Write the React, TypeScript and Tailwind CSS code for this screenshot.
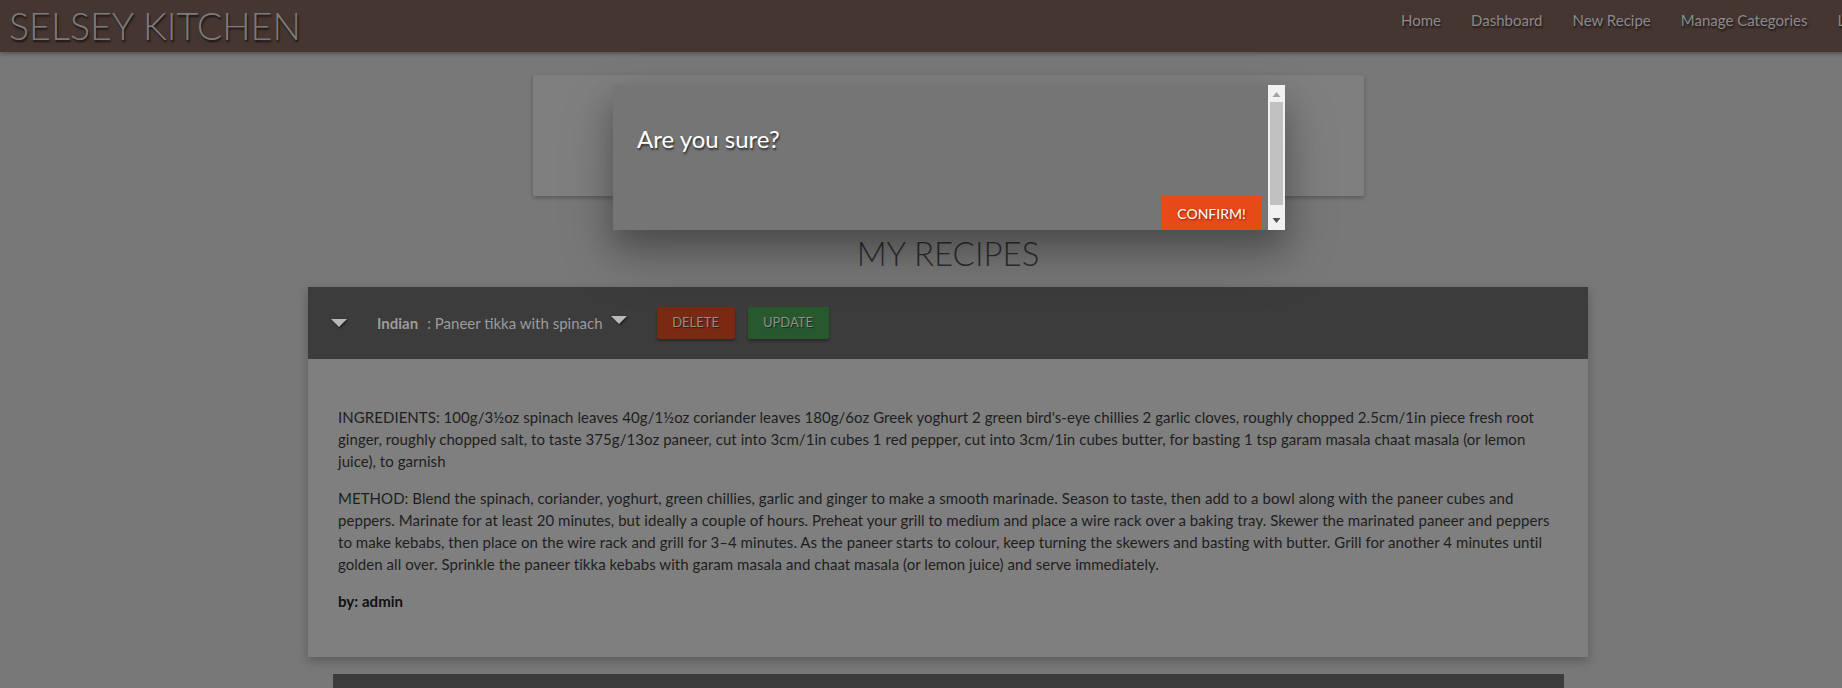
import React from "react";

const ingredients =
  "INGREDIENTS: 100g/3½oz spinach leaves 40g/1½oz coriander leaves 180g/6oz Greek yoghurt 2 green bird's-eye chillies 2 garlic cloves, roughly chopped 2.5cm/1in piece fresh root ginger, roughly chopped salt, to taste 375g/13oz paneer, cut into 3cm/1in cubes 1 red pepper, cut into 3cm/1in cubes butter, for basting 1 tsp garam masala chaat masala (or lemon juice), to garnish";

const method =
  "METHOD: Blend the spinach, coriander, yoghurt, green chillies, garlic and ginger to make a smooth marinade. Season to taste, then add to a bowl along with the paneer cubes and peppers. Marinate for at least 20 minutes, but ideally a couple of hours. Preheat your grill to medium and place a wire rack over a baking tray. Skewer the marinated paneer and peppers to make kebabs, then place on the wire rack and grill for 3–4 minutes. As the paneer starts to colour, keep turning the skewers and basting with butter. Grill for another 4 minutes until golden all over. Sprinkle the paneer tikka kebabs with garam masala and chaat masala (or lemon juice) and serve immediately.";

const navLinks = ["Home", "Dashboard", "New Recipe", "Manage Categories", "Logout"];

// small down caret used in the collapsible header
function Caret() {
  return (
    <svg width="16" height="9" viewBox="0 0 16 9" className="drop-shadow-[1px_1px_1px_rgba(0,0,0,0.6)]">
      <polygon points="0,0 16,0 8,8" fill="#b9b9b9" />
    </svg>
  );
}

export default function App() {
  return (
    <div className="relative w-[1842px] h-[688px] overflow-hidden bg-[#787878] font-['Lato','Open_Sans',sans-serif]">
      <div className="w-[1896px]">
        {/* Navbar */}
        <nav className="flex h-[52px] items-center bg-[#463632] shadow-[0_2px_4px_rgba(0,0,0,0.3)]">
          <span className="w-[1386px] shrink-0 pl-[9px] text-[37.6px] font-light leading-none text-[#7b7b7b] [text-shadow:1px_2px_2px_rgba(0,0,0,0.7)]">
            SELSEY KITCHEN
          </span>
          <ul className="flex self-start pt-[11px]">
            {navLinks.map((l) => (
              <li key={l} className="px-[15px] text-[15px] leading-[18px] text-[#8a8a8a] [text-shadow:1px_2px_2px_rgba(0,0,0,0.6)] whitespace-nowrap">
                {l}
              </li>
            ))}
          </ul>
        </nav>

        <main className="flex flex-col items-center">
          {/* top card (form area, covered by modal) */}
          <div className="mt-[23px] h-[121px] w-[831px] rounded-[2px] bg-[#7f7f7f] shadow-[0_2px_4px_rgba(0,0,0,0.25)]" />

          <h3 className="mt-[37px] mb-[14px] h-[40px] text-[33px] font-light leading-[40px] text-[#2d2d2d]">
            MY RECIPES
          </h3>

          {/* recipe card */}
          <div className="w-[1280px] bg-[#7f7f7f] shadow-[0_4px_10px_rgba(0,0,0,0.25)]">
            <div className="flex h-[72px] items-center bg-[#3c3c3c] pl-[23px]">
              <Caret />
              <span className="ml-[30px] text-[15px] font-bold text-[#9b9b9b]">Indian</span>
              <span className="ml-[9px] text-[15px] text-[#9b9b9b]">: Paneer tikka with spinach</span>
              <span className="ml-[8px] -mt-[6px]">
                <Caret />
              </span>
              <button className="ml-[30px] h-[32px] w-[78px] rounded-[2px] bg-[#7a2912] text-[13px] uppercase text-[#8e8e8e] shadow-[0_2px_3px_rgba(0,0,0,0.35)] [text-shadow:1px_1px_1px_rgba(0,0,0,0.5)]">
                Delete
              </button>
              <button className="ml-[13px] h-[32px] w-[81px] rounded-[2px] bg-[#28592e] text-[13px] uppercase text-[#8e8e8e] shadow-[0_2px_3px_rgba(0,0,0,0.35)] [text-shadow:1px_1px_1px_rgba(0,0,0,0.5)]">
                Update
              </button>
            </div>
            <div className="px-[30px] pt-[47px] pb-[45px] text-[15px] leading-[22px] tracking-[0.05px] text-[#1e1e1e]">
              <p className="mb-[15px]">{ingredients}</p>
              <p className="mb-[15px]">{method}</p>
              <p className="font-bold text-[#111]">by: admin</p>
            </div>
          </div>

          {/* next recipe card header */}
          <div className="mt-[17px] h-[40px] w-[1231px] bg-[#3c3c3c]" />
        </main>
      </div>

      {/* Confirm modal */}
      <div className="absolute left-[613px] top-[85px] flex h-[145px] w-[672px] overflow-hidden bg-[#757575] shadow-[0_16px_28px_rgba(0,0,0,0.22),0_25px_55px_rgba(0,0,0,0.21)]">
        <div className="flex flex-1 flex-col pl-[24px] pr-[6px]">
          <h4 className="mt-[40px] text-[24px] leading-[28px] text-white [text-shadow:1px_2px_2px_rgba(0,0,0,0.6)]">
            Are you sure?
          </h4>
          <div className="mt-auto flex justify-end">
            <button className="h-[34px] w-[101px] bg-[#e64a19] text-[14px] uppercase text-white [text-shadow:1px_1px_2px_rgba(0,0,0,0.5)]">
              Confirm!
            </button>
          </div>
        </div>
        {/* scrollbar */}
        <div className="flex w-[17px] flex-col items-center bg-[#f1f1f1]">
          <svg width="9" height="17" viewBox="0 0 9 17" className="shrink-0">
            <polygon points="0.5,12 8.5,12 4.5,7" fill="#a3a3a3" />
          </svg>
          <div className="h-[103px] w-[13px] bg-[#c1c1c1]" />
          <svg width="9" height="17" viewBox="0 0 9 17" className="mt-auto shrink-0">
            <polygon points="0.5,5 8.5,5 4.5,10" fill="#505050" />
          </svg>
        </div>
      </div>
    </div>
  );
}
